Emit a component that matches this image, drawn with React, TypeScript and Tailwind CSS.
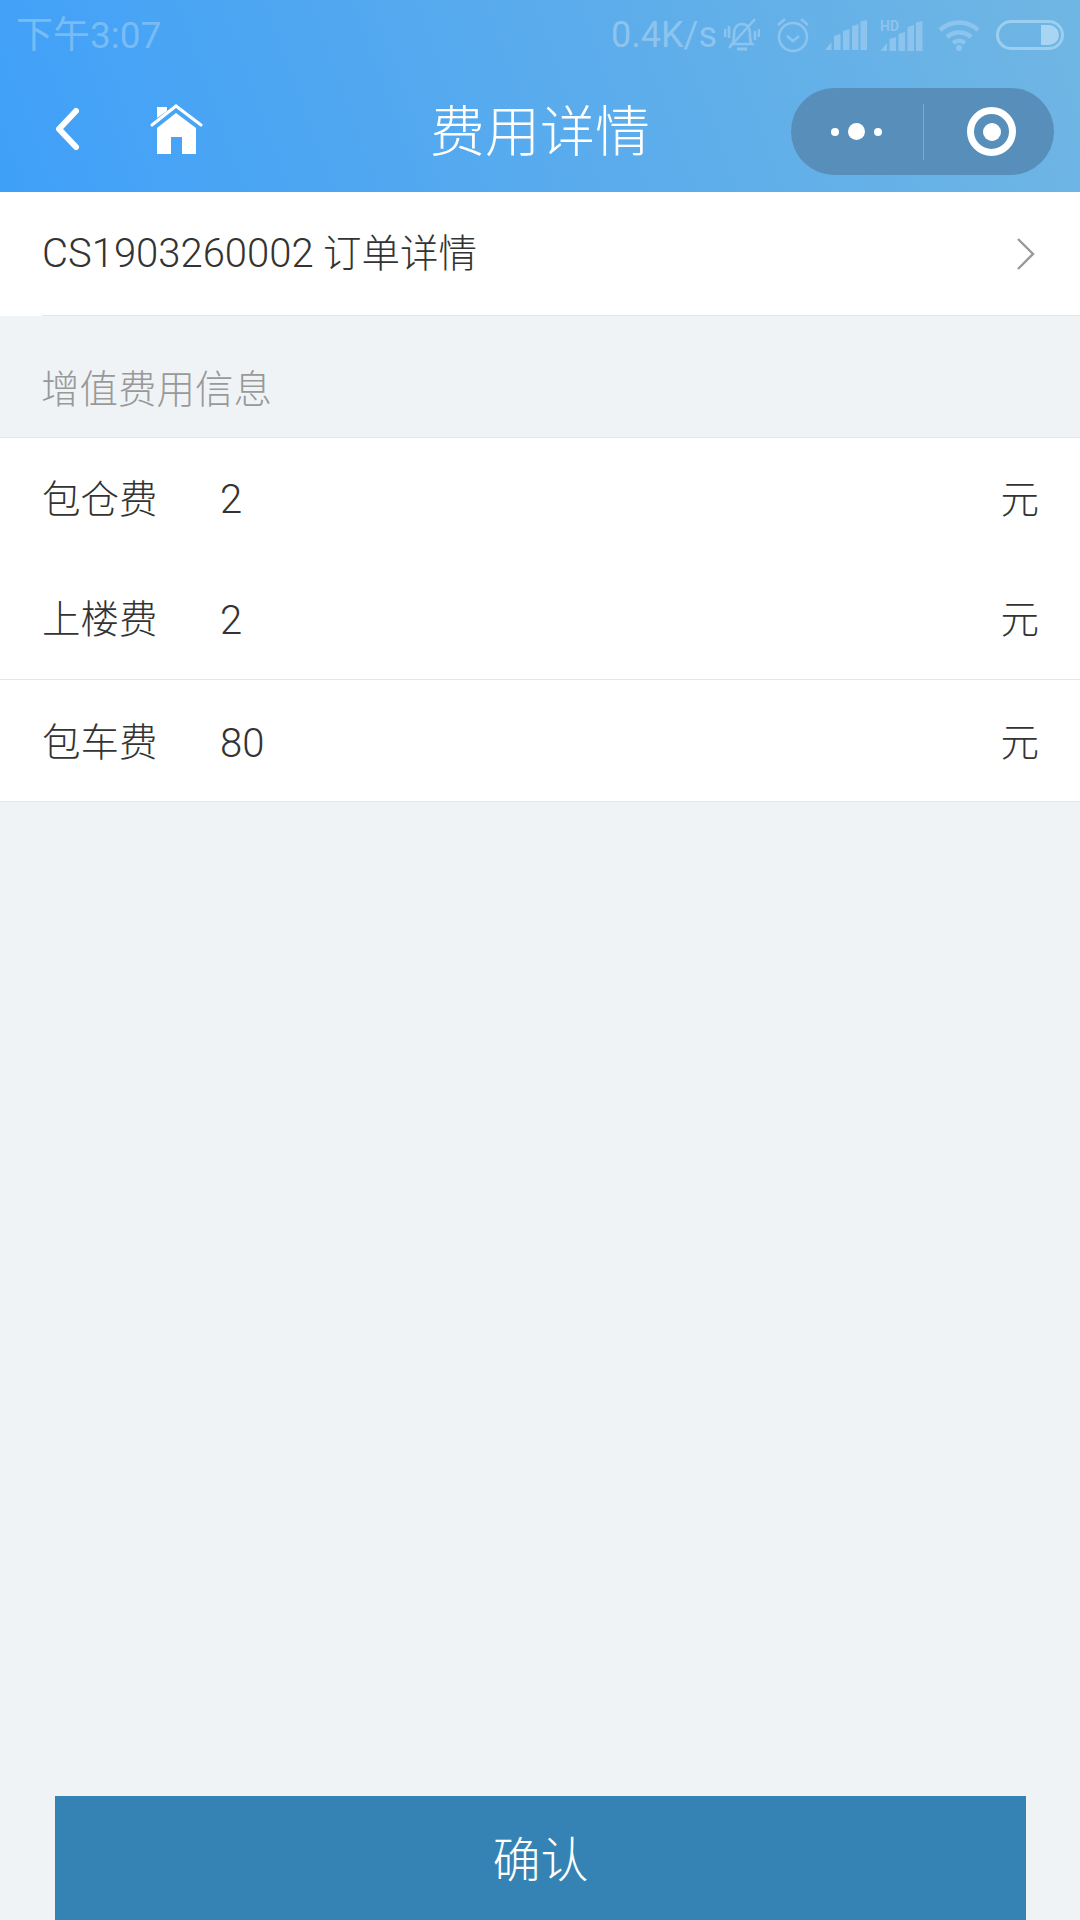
const CJK = "font-['Roboto','Noto_Sans_CJK_SC',sans-serif]";

const fees = [
  { name: '包仓费', amount: '2', line: false },
  { name: '上楼费', amount: '2', line: true },
  { name: '包车费', amount: '80', line: true },
];

function StatusIcons() {
  return (
    <div className="flex items-center text-[#8cc4ee]">
      <span className="text-[36px] leading-none">0.4K/s</span>
      {/* muted bell */}
      <svg width="36" height="36" viewBox="0 0 36 36" fill="none" stroke="currentColor" strokeWidth="2.6" className="ml-[7px]">
        <path d="M8 27c2-2 2-4 2-10 0-6 3-10 8-10s8 4 8 10c0 6 0 8 2 10z" />
        <path d="M13 32h10" strokeWidth="3" />
        <path d="M31 2 5 31" />
        <path d="M1 12v8M5 9v12M35 12v8M31 14v9" />
      </svg>
      {/* alarm */}
      <svg width="34" height="36" viewBox="0 0 34 36" fill="none" stroke="currentColor" strokeWidth="2.6" className="ml-[16px]">
        <circle cx="17" cy="20" r="14" />
        <path d="M11 19l6 5 6-5" />
        <path d="M2 8l7-6M32 8l-7-6" />
      </svg>
      {/* signal */}
      <svg width="42" height="30" viewBox="0 0 42 30" fill="currentColor" className="ml-[15px]">
        <path d="M0 30l6.5-8v8zM9 16l6.5-2v16H9zM18 11l6.5-2v21H18zM27 6l6.5-2v26H27zM35.500 1.500 42 0v30h-6.500z" />
      </svg>
      <div className="relative ml-[13px] h-[31px] w-[43px]">
        <svg width="43" height="30" viewBox="0 0 42 30" fill="currentColor" className="absolute bottom-0 left-0">
          <path d="M0 30l6.5-8v8zM9 18l6.5-2v14H9zM18 13l6.5-2v19H18zM27 6l6.5-2v26H27zM35.500 1.500 42 0v30h-6.500z" />
        </svg>
        <span className="absolute left-0 top-[-1px] text-[14px] font-bold leading-none">HD</span>
      </div>
      {/* wifi */}
      <svg width="42" height="32" viewBox="0 0 42 32" fill="none" stroke="currentColor" strokeWidth="4.5" className="ml-[15px]">
        <path d="M2 11c11-10 27-10 38 0" />
        <path d="M9 18c7-6 17-6 24 0" />
        <path d="M15 24c4-3 8-3 12 0" />
        <circle cx="21" cy="29" r="3" fill="currentColor" stroke="none" />
      </svg>
      {/* battery */}
      <div className="ml-[16px] flex h-[30px] w-[68px] justify-end rounded-full border-[3px] border-[#9ccfef] p-[2px]">
        <div className="h-full w-[18px] rounded-r-full bg-[#a8d6f2]" />
      </div>
    </div>
  );
}

function Header() {
  return (
    <header className="h-[192px] bg-[linear-gradient(70deg,#3fa0f9_0%,#54a9ef_40%,#70b6e3_100%)]">
      <div className="flex h-[70px] items-center justify-between pl-[16px] pr-[16px]">
        <span className="text-[37px] leading-none text-[#79bbf4]">下午3:07</span>
        <StatusIcons />
      </div>
      <div className="relative flex h-[122px] items-center pl-[52px]">
        <svg width="32" height="46" viewBox="0 0 32 46" fill="none" stroke="white" strokeWidth="6" strokeLinecap="round" strokeLinejoin="round" className="mb-[5px]">
          <path d="M24 5 7 23l17 18" />
        </svg>
        <svg width="54" height="52" viewBox="0 0 54 52" fill="white" className="ml-[66px] mb-[3px]">
          <path d="M2 21 26 2l25 19" fill="none" stroke="white" strokeWidth="3" strokeLinecap="round" />
          <path d="M7 14V3h10v4z" />
          <path d="M26 9l20 15v26H32V33H21v17H7V24z" />
        </svg>
        <h1 className="absolute inset-x-0 mt-[2px] text-center text-[55px] font-light leading-none text-white">费用详情</h1>
        <div className="absolute right-[26px] top-[18px] flex h-[87px] w-[263px] items-center rounded-full bg-[#578fba]">
          <div className="ml-[40px] flex items-center gap-[9px]">
            <span className="h-[8px] w-[8px] rounded-full bg-white" />
            <span className="h-[17px] w-[17px] rounded-full bg-white" />
            <span className="h-[8px] w-[8px] rounded-full bg-white" />
          </div>
          <div className="ml-[41px] h-[56px] w-px bg-[#7fabcc]" />
          <div className="ml-[43px] flex h-[49px] w-[49px] items-center justify-center rounded-full border-[7px] border-white">
            <span className="h-[18px] w-[18px] rounded-full bg-white" />
          </div>
        </div>
      </div>
    </header>
  );
}

function FeeRow({ name, amount, line }: { name: string; amount: string; line: boolean }) {
  return (
    <div className={`flex h-[121px] items-center pl-[42px] pr-[41px] pt-[3px] text-[#333] last:h-[122px] last:pt-[6px] ${line ? 'border-b border-[#e3e5e7]' : ''}`}>
      <span className="w-[178px] text-[38.5px] font-light leading-none">{name}</span>
      <span className="flex-1 text-[40px] font-light leading-none">{amount}</span>
      <span className="text-[38.5px] font-light leading-none">元</span>
    </div>
  );
}

export default function App() {
  return (
    <div className={`flex h-[1920px] w-[1080px] flex-col overflow-hidden bg-[#f0f3f6] ${CJK}`}>
      <Header />
      <div className="bg-white pl-[42px]">
        <div className="flex h-[124px] items-center justify-between border-b border-[#e3e5e7] pr-[44px]">
          <span className="text-[38.5px] font-light leading-none text-[#333]">
            <span className="text-[40px]">CS1903260002</span> 订单详情
          </span>
          <svg width="20" height="34" viewBox="0 0 20 34" fill="none" stroke="#999" strokeWidth="2.4">
            <path d="M2 2l15 15L2 32" />
          </svg>
        </div>
      </div>
      <div className="flex h-[122px] items-center border-b border-[#e3e5e7] pl-[41px] pt-[28px] text-[38.5px] font-light leading-none text-[#999]">
        增值费用信息
      </div>
      <div className="bg-white">
        {fees.map((fee) => (
          <FeeRow key={fee.name} {...fee} />
        ))}
      </div>
      <div className="flex-1" />
      <button className="ml-[55px] mr-[54px] flex h-[124px] items-center justify-center bg-[#3483b4] pt-[6px] text-[48px] font-light text-white">
        确认
      </button>
    </div>
  );
}
